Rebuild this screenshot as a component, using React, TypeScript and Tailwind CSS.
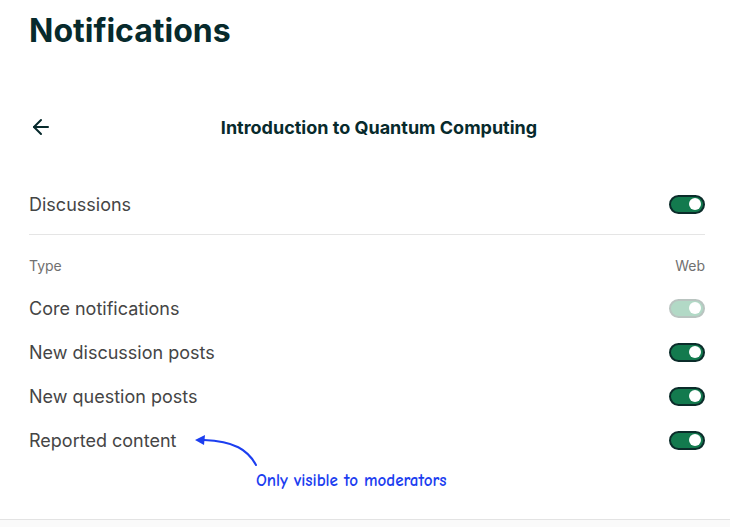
import { ArrowLeft } from "lucide-react";

type Row = { label: string; on: boolean; disabled?: boolean };

const rows: Row[] = [
  { label: "Core notifications", on: true, disabled: true },
  { label: "New discussion posts", on: true },
  { label: "New question posts", on: true },
  { label: "Reported content", on: true },
];

function Toggle({ disabled }: { disabled?: boolean }) {
  return (
    <div
      className={
        disabled
          ? "flex h-[19px] w-[36px] items-center justify-end rounded-full border-2 border-[#b9c4c0] bg-[#b2d9c6] pr-[2px]"
          : "flex h-[19px] w-[36px] items-center justify-end rounded-full border-2 border-[#0b2c2a] bg-[#137a4e] pr-[2px]"
      }
    >
      <span className="block h-[12px] w-[12px] rounded-full bg-white" />
    </div>
  );
}

export default function App() {
  return (
    <div
      className="flex min-h-screen flex-col bg-white"
      style={{ fontFamily: "Inter, 'Noto Sans', sans-serif" }}
    >
      <main className="flex-1 pl-[29px] pr-[25px] pt-[13px]">
        <h1 className="text-[32px] font-bold leading-9 text-[#072a2c]">
          Notifications
        </h1>

        <div className="mt-[54px] flex h-12 items-center">
          <button className="flex w-6 items-center text-[#072a2c]">
            <ArrowLeft size={24} strokeWidth={2} />
          </button>
          <h2 className="flex-1 text-center text-[18px] font-bold text-[#072a2c]">
            Introduction to Quantum Computing
          </h2>
        </div>

        <div className="mt-[31px] flex h-11 items-center justify-between">
          <span className="text-[18px] text-[#454545]">Discussions</span>
          <Toggle />
        </div>

        <div className="mt-[8px] h-px bg-[#e5e5e5]" />

        <div className="mt-[20px] flex h-5 items-center justify-between text-[14px] text-[#707070]">
          <span>Type</span>
          <span>Web</span>
        </div>

        <div className="mt-[11px]">
          {rows.map((row, i) => (
            <div
              key={row.label}
              className="relative flex h-11 items-center justify-between"
            >
              <span className="text-[18px] text-[#454545]">{row.label}</span>
              <Toggle disabled={row.disabled} />
              {i === rows.length - 1 && (
                <>
                  <svg
                    className="absolute left-[161px] top-[10px]"
                    width="72"
                    height="40"
                    viewBox="0 0 72 40"
                    fill="none"
                  >
                    <path
                      d="M66 37 C 58 22, 44 13, 14 12"
                      stroke="#1c3ef0"
                      strokeWidth="2"
                      strokeLinecap="round"
                    />
                    <path d="M5 12 L15 7 L14 17 Z" fill="#1c3ef0" />
                  </svg>
                  <span
                    className="absolute left-[227px] top-[53px] text-[17px] font-bold leading-5 text-[#1c3ef0]"
                    style={{ fontFamily: "'Comic Sans MS', 'Comic Neue', cursive" }}
                  >
                    Only visible to moderators
                  </span>
                </>
              )}
            </div>
          ))}
        </div>
      </main>
      <footer className="h-2 border-t border-[#e3e3e3] bg-[#fafafa]" />
    </div>
  );
}
